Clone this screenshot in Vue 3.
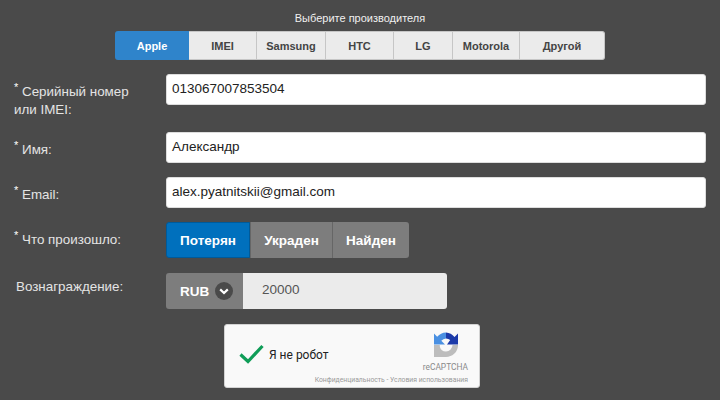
<script setup>
const brands = [
  { name: 'Apple', w: 74, active: true },
  { name: 'IMEI', w: 68 },
  { name: 'Samsung', w: 69 },
  { name: 'HTC', w: 68 },
  { name: 'LG', w: 59 },
  { name: 'Motorola', w: 67 },
  { name: 'Другой', w: 85 }
]
const statuses = [
  { name: 'Потерян', w: 84, active: true },
  { name: 'Украден', w: 82 },
  { name: 'Найден', w: 77 }
]
</script>

<template>
  <div class="page">
    <div class="title">Выберите производителя</div>
    <div class="brands">
      <div v-for="b in brands" :key="b.name" class="brand" :class="{ on: b.active }" :style="{ width: b.w + 'px' }">{{ b.name }}</div>
    </div>

    <div class="row first">
      <label class="label"><sup>*</sup> Серийный номер<br>или IMEI:</label>
      <div class="input">013067007853504</div>
    </div>
    <div class="row">
      <label class="label"><sup>*</sup> Имя:</label>
      <div class="input">Александр</div>
    </div>
    <div class="row">
      <label class="label"><sup>*</sup> Email:</label>
      <div class="input">alex.pyatnitskii@gmail.com</div>
    </div>
    <div class="row">
      <label class="label"><sup>*</sup> Что произошло:</label>
      <div class="status">
        <div v-for="s in statuses" :key="s.name" class="st" :class="{ on: s.active }" :style="{ width: s.w + 'px' }">{{ s.name }}</div>
      </div>
    </div>
    <div class="row last">
      <label class="label plain">Вознаграждение:</label>
      <div class="reward">
        <div class="cur">RUB
          <span class="chev"><svg width="18" height="18" viewBox="0 0 18 18"><circle cx="9" cy="9" r="9" fill="#4a4a4a"/><path d="M5.200 7.400 9 11l3.800-3.600" fill="none" stroke="#fff" stroke-width="2.2"/></svg></span>
        </div>
        <div class="amount">20000</div>
      </div>
    </div>

    <div class="captcha">
      <svg class="check" width="25" height="20" viewBox="0 0 25 20"><path d="M1.500 10.500 9 17.500 23.500 2" fill="none" stroke="#0f9d58" stroke-width="3.2"/></svg>
      <span class="robot">Я не робот</span>
      <svg class="logo" width="26" height="26" viewBox="0 0 26 26">
        <path d="M1 13V25H13A12 12 0 0 0 25 14V13H19.500A6.500 6.500 0 0 1 13 19.500A6.500 6.500 0 0 1 6.800 14.500V13Z" fill="#bdbdbd"/>
        <path d="M1 1.500V12.500H12L8.300 8.800A6.500 6.500 0 0 1 13 6.500V0.500A12.500 12.500 0 0 0 4.200 4.700Z" fill="#4a90e2"/>
        <path d="M13 0.500V6.500A6.500 6.500 0 0 1 17.200 8L14 12.500H25V1.500L21.500 5A12.500 12.500 0 0 0 13 0.500Z" fill="#1c3aa9"/>
      </svg>
      <span class="brandname">reCAPTCHA</span>
      <span class="links">Конфиденциальность - Условия использования</span>
    </div>
  </div>
</template>

<style>
html, body { margin: 0; background: #4a4a4a; }
</style>

<style scoped>
.page {
  width: 720px;
  height: 400px;
  overflow: hidden;
  box-sizing: border-box;
  background: #4a4a4a;
  font-family: "Liberation Sans", Arial, sans-serif;
  color: #eee;
  position: relative;
}
.title {
  text-align: center;
  font-size: 11px;
  line-height: 13px;
  padding-top: 12px;
  color: #f0f0f0;
}
.brands {
  display: flex;
  margin: 6px 0 0 115px;
  height: 29px;
}
.brand {
  box-sizing: border-box;
  background: #ebebeb;
  color: #444;
  font-weight: 700;
  font-size: 11px;
  display: flex;
  align-items: center;
  justify-content: center;
  border: 1px solid #c6c6c6;
  border-left: 0;
}
.brand:last-child { border-radius: 0 3px 3px 0; }
.brand.on {
  background: #2f84cb;
  color: #fff;
  border: 0;
  border-radius: 3px 0 0 3px;
}
.row {
  display: flex;
  align-items: flex-start;
  padding-left: 14px;
  margin-top: 14px;
}
.row.last { margin-top: 15px; }
.label {
  width: 152px;
  flex: none;
  font-size: 13.4px;
  line-height: 18px;
  color: #e4e4e4;
  padding-top: 9px;
  box-sizing: border-box;
}
.first .label { height: 44px; }
.label.plain { padding: 5px 0 0 2px; }
.label sup {
  font-size: 11px;
  line-height: 0;
  color: #fff;
  vertical-align: 5px;
}
.input {
  box-sizing: border-box;
  width: 540px;
  height: 31px;
  background: #fff;
  border: 1px solid #ddd;
  border-radius: 3px;
  color: #222;
  font-size: 13.5px;
  line-height: 28px;
  padding-left: 5px;
}
.status { display: flex; height: 36px; }
.st {
  box-sizing: border-box;
  background: #7d7d7d;
  color: #fff;
  font-weight: 700;
  font-size: 13.5px;
  display: flex;
  align-items: center;
  justify-content: center;
  border-left: 1px solid #666;
}
.st:last-child { border-radius: 0 3px 3px 0; }
.st.on {
  background: #0070bd;
  border: 1px solid #005a99;
  border-radius: 3px 0 0 3px;
}
.reward { display: flex; height: 36px; }
.cur {
  box-sizing: border-box;
  width: 77px;
  background: #7d7d7d;
  color: #fff;
  font-weight: 700;
  font-size: 13.5px;
  display: flex;
  align-items: center;
  padding-left: 14px;
  gap: 6px;
  border-radius: 3px 0 0 3px;
}
.chev { display: flex; }
.amount {
  box-sizing: border-box;
  width: 204px;
  background: #ebebeb;
  color: #555;
  font-size: 13.5px;
  line-height: 34px;
  padding-left: 19px;
  border-radius: 0 3px 3px 0;
}
.captcha {
  position: absolute;
  left: 224px;
  top: 324px;
  width: 256px;
  height: 64px;
  background: #f9f9f9;
  border: 1px solid #d3d3d3;
  border-radius: 3px;
  box-sizing: border-box;
}
.check { position: absolute; left: 14px; top: 19px; }
.robot {
  position: absolute;
  left: 44px;
  top: 23px;
  font-family: Roboto, sans-serif;
  font-size: 12px;
  line-height: 14px;
  color: #222;
}
.logo { position: absolute; left: 208px; top: 7px; }
.brandname {
  position: absolute;
  right: 11px;
  top: 37px;
  font-family: Roboto, sans-serif;
  font-size: 8.4px;
  line-height: 10px;
  color: #8a8a8a;
}
.links {
  position: absolute;
  right: 11px;
  top: 51px;
  font-family: Roboto, sans-serif;
  font-size: 6.8px;
  line-height: 9px;
  color: #9a9a9a;
  white-space: nowrap;
}
</style>
